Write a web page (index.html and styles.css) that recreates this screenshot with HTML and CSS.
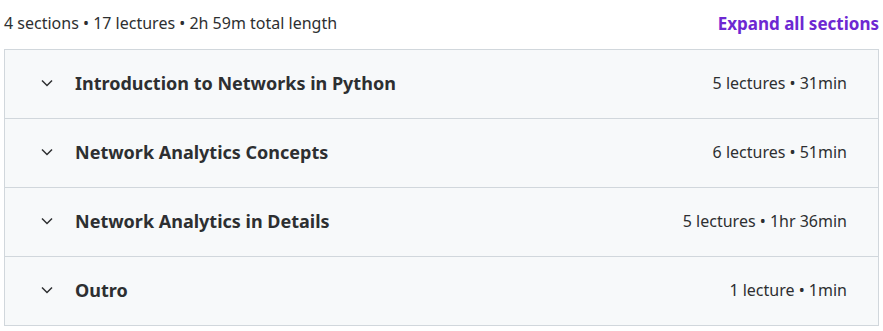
FILE: index.html
```html
<!DOCTYPE html>
<html>
<head>
    <title>Course content</title>
    <link rel="stylesheet" href="styles.css">
</head>
<body>
    <!-- Course curriculum summary -->
    <div class="curriculum">
        <div class="curriculum-header">
            <span class="summary">4 sections • 17 lectures • 2h 59m total length</span>
            <button class="expand-all">Expand all sections</button>
        </div>

        <!-- Section list -->
        <div class="sections">
            <div class="section">
                <svg class="chevron" viewBox="0 0 24 24"><path d="M6 9l6 6 6-6"/></svg>
                <span class="section-title">Introduction to Networks in Python</span>
                <span class="section-meta">5 lectures • 31min</span>
            </div>
            <div class="section">
                <svg class="chevron" viewBox="0 0 24 24"><path d="M6 9l6 6 6-6"/></svg>
                <span class="section-title">Network Analytics Concepts</span>
                <span class="section-meta">6 lectures • 51min</span>
            </div>
            <div class="section">
                <svg class="chevron" viewBox="0 0 24 24"><path d="M6 9l6 6 6-6"/></svg>
                <span class="section-title">Network Analytics in Details</span>
                <span class="section-meta">5 lectures • 1hr 36min</span>
            </div>
            <div class="section">
                <svg class="chevron" viewBox="0 0 24 24"><path d="M6 9l6 6 6-6"/></svg>
                <span class="section-title">Outro</span>
                <span class="section-meta">1 lecture • 1min</span>
            </div>
        </div>
    </div>
</body>
</html>
```

FILE: styles.css
```css
/* Basic page styling */
body {
    margin: 0;
    font-family: "Noto Sans", Arial, sans-serif;
    color: #2d2f31;
    background: #ffffff;
}

.curriculum {
    padding: 0 4px;
}

/* Summary line and expand link */
.curriculum-header {
    display: flex;
    justify-content: space-between;
    align-items: center;
    height: 46px;
    padding-bottom: 3px;
}

.summary {
    font-size: 16px;
    color: #2d2f31;
}

.expand-all {
    background: none;
    border: none;
    padding: 0;
    font-family: inherit;
    font-size: 17px;
    font-weight: bold;
    color: #6d28d2;
    cursor: pointer;
}

/* Section list box */
.sections {
    border: 1px solid #d1d7dc;
}

.section {
    display: flex;
    align-items: center;
    height: 68px;
    padding: 0 31px 2px 32px;
    box-sizing: border-box;
    height: 69px;
    background: #f7f9fa;
    border-bottom: 1px solid #d1d7dc;
}

.section:last-child {
    border-bottom: none;
    height: 68px;
}

.chevron {
    width: 20px;
    height: 20px;
    fill: none;
    stroke: #2d2f31;
    stroke-width: 1.8;
    margin-right: 18px;
}

.section-title {
    flex: 1;
    font-size: 18px;
    font-weight: bold;
}

.section-meta {
    font-size: 16px;
    color: #2d2f31;
}
```
